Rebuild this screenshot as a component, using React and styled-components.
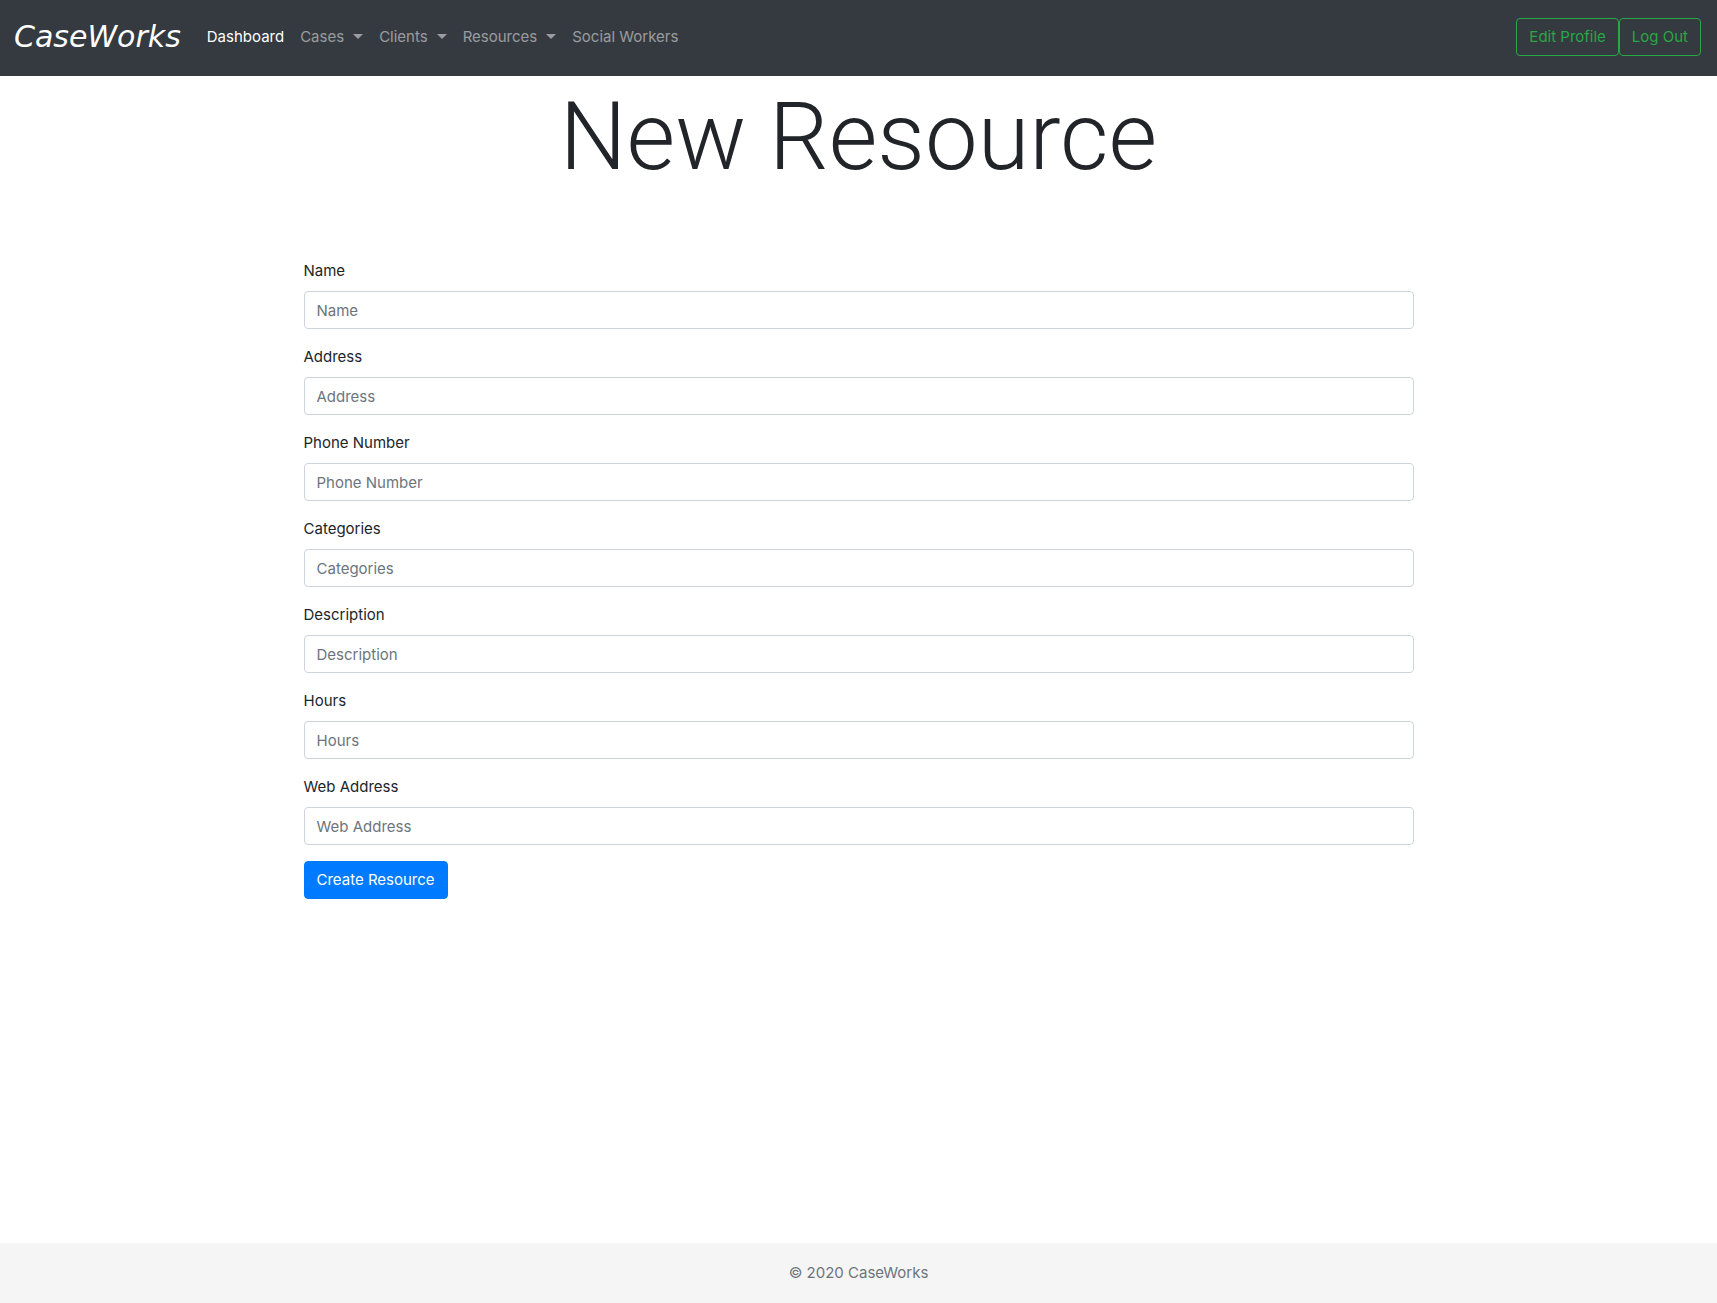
import React from "react";
import styled, { createGlobalStyle } from "styled-components";

const GlobalStyle = createGlobalStyle`
  *, *::before, *::after { box-sizing: border-box; }
  body {
    margin: 0;
    background: #fff;
    color: #212529;
    font-family: Inter, "Liberation Sans", sans-serif;
    font-size: 15px;
    line-height: 24px;
  }
  button, input { font: inherit; }
`;

const Page = styled.div`
  display: flex;
  flex-direction: column;
  min-height: 100vh;
`;

const Navbar = styled.header`
  display: flex;
  align-items: center;
  padding: 18px 16px 20px 14px;
  background: #343a40;
`;

const Brand = styled.a`
  margin-right: 18px;
  color: #fff;
  font: italic 400 30px/38px "DejaVu Sans", sans-serif;
  text-decoration: none;
`;

const NavLinks = styled.nav`
  display: flex;
  flex: 1;
`;

const NavLink = styled.a`
  display: inline-flex;
  align-items: center;
  padding: 0 8px;
  color: ${({ $active }) => ($active ? "#fff" : "rgba(255, 255, 255, 0.5)")};
  text-decoration: none;
`;

const Caret = styled.span`
  margin: 0 0 2px 9px;
  border: 5px solid transparent;
  border-top-color: currentColor;
  border-bottom: 0;
`;

const Actions = styled.div`
  display: flex;
`;

const Button = styled.button`
  height: 38px;
  padding: 0 12px;
  border: 1px solid ${({ $primary }) => ($primary ? "#007bff" : "#28a745")};
  border-radius: 4px;
  background: ${({ $primary }) => ($primary ? "#007bff" : "transparent")};
  color: ${({ $primary }) => ($primary ? "#fff" : "#28a745")};
  cursor: pointer;
`;

const Main = styled.main`
  flex: 1;
`;

const Title = styled.h1`
  margin: 0;
  padding: 4px 0 64px;
  font-family: Roboto, sans-serif;
  font-size: 94px;
  font-weight: 300;
  line-height: 115px;
  text-align: center;
`;

const Form = styled.form`
  width: 100%;
  max-width: 1140px;
  margin: 0 auto;
  padding: 0 15px 16px;
`;

const Field = styled.div`
  display: flex;
  flex-direction: column;
  gap: 8px;
  margin-bottom: 16px;
`;

const Input = styled.input`
  width: 100%;
  height: 38px;
  padding: 0 12px;
  border: 1px solid #ced4da;
  border-radius: 4px;
  background: #fff;
  color: #495057;
  &::placeholder { color: #6c757d; opacity: 1; }
`;

const Footer = styled.footer`
  padding: 18px 15px;
  background: #f5f5f5;
  color: #6c757d;
  text-align: center;
`;

const links = [
  { label: "Dashboard", active: true },
  { label: "Cases", menu: true },
  { label: "Clients", menu: true },
  { label: "Resources", menu: true },
  { label: "Social Workers" },
];

const fields = [
  ["name", "Name"],
  ["address", "Address"],
  ["phone", "Phone Number"],
  ["categories", "Categories"],
  ["description", "Description"],
  ["hours", "Hours"],
  ["web", "Web Address"],
];

export default function App() {
  return (
    <Page>
      <GlobalStyle />
      <Navbar>
        <Brand href="#">CaseWorks</Brand>
        <NavLinks>
          {links.map(({ label, active, menu }) => (
            <NavLink key={label} href="#" $active={active}>
              {label}
              {menu && <Caret />}
            </NavLink>
          ))}
        </NavLinks>
        <Actions>
          <Button type="button">Edit Profile</Button>
          <Button type="button">Log Out</Button>
        </Actions>
      </Navbar>
      <Main>
        <Title>New Resource</Title>
        <Form onSubmit={(e) => e.preventDefault()}>
          {fields.map(([id, label]) => (
            <Field key={id}>
              <label htmlFor={id}>{label}</label>
              <Input id={id} name={id} type="text" placeholder={label} />
            </Field>
          ))}
          <Button type="submit" $primary>Create Resource</Button>
        </Form>
      </Main>
      <Footer>© 2020 CaseWorks</Footer>
    </Page>
  );
}
